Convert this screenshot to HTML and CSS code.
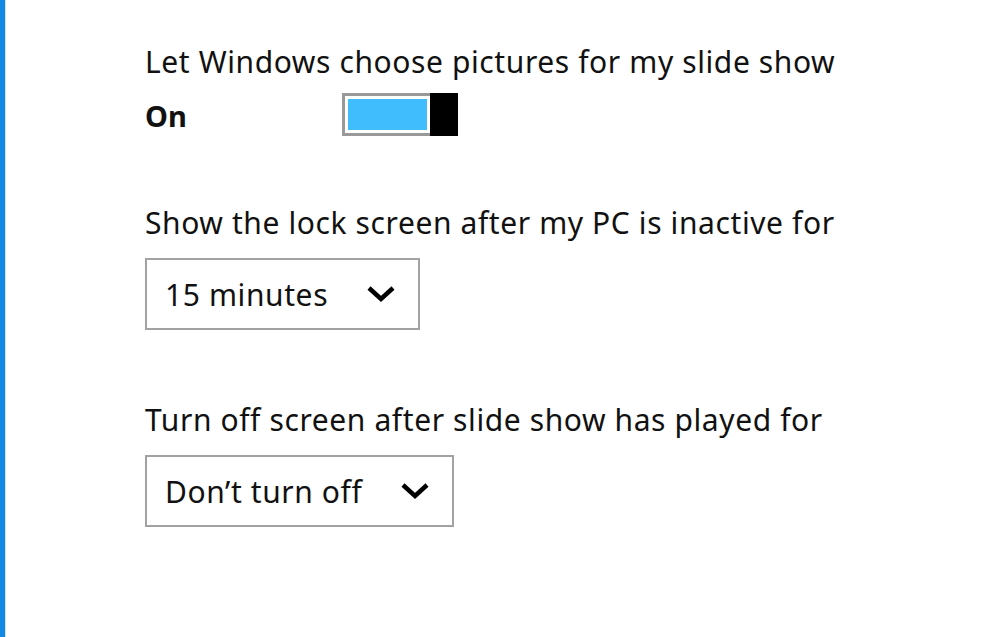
FILE: index.html
```html
<!DOCTYPE html>
<html lang="en">
<head>
<meta charset="utf-8">
<title>Lock screen settings</title>
<link rel="stylesheet" href="styles.css">
</head>
<body>
<div class="page">
  <div class="accent"></div>
  <main class="content">
    <section class="setting setting-first">
      <div class="label">Let Windows choose pictures for my slide show</div>
      <div class="toggle-row">
        <span class="state">On</span>
        <span class="toggle"><span class="track"></span><span class="thumb"></span></span>
      </div>
    </section>
    <section class="setting setting-second">
      <div class="label">Show the lock screen after my PC is inactive for</div>
      <div class="select">
        <span class="select-text">15 minutes</span>
        <svg class="chev" width="30" height="18" viewBox="0 0 30 18"><polyline points="3,3 15,14 27,3" fill="none" stroke="#000" stroke-width="4.5" stroke-linejoin="miter"/></svg>
      </div>
    </section>
    <section class="setting setting-third">
      <div class="label">Turn off screen after slide show has played for</div>
      <div class="select">
        <span class="select-text">Don’t turn off</span>
        <svg class="chev" width="30" height="18" viewBox="0 0 30 18"><polyline points="3,3 15,14 27,3" fill="none" stroke="#000" stroke-width="4.5" stroke-linejoin="miter"/></svg>
      </div>
    </section>
  </main>
</div>
</body>
</html>
```
FILE: styles.css
```css
html, body {
  margin: 0;
  padding: 0;
  background: #ffffff;
}
body {
  font-family: "Noto Sans", "Open Sans", "DejaVu Sans", sans-serif;
  color: #111;
}
.page {
  display: flex;
  min-height: 637px;
}
.accent {
  width: 5px;
  background: #1489e4;
  border-right: 1px solid #cfe6fa;
  flex: none;
}
.content {
  padding-left: 139px;
  padding-top: 42px;
  display: flex;
  flex-direction: column;
}
.label {
  font-size: 30px;
  line-height: 40px;
  letter-spacing: 0.6px;
  white-space: nowrap;
}
.toggle-row {
  display: flex;
  align-items: center;
  margin-top: 8px;
}
.state {
  width: 197px;
  font-size: 29px;
  font-weight: 700;
  line-height: 44px;
  padding-top: 4px;
}
.toggle {
  display: flex;
  width: 116px;
  height: 43px;
  box-sizing: border-box;
}
.track {
  flex: 1;
  border: 3px solid #999;
  border-right: none;
  padding: 3px 0 3px 3px;
  background: #3fbdfc;
  background-clip: content-box;
  box-shadow: inset 0 0 0 3px #fff;
}
.thumb {
  width: 28px;
  background: #000;
}
.setting-second { margin-top: 65px; }
.setting-third { margin-top: 70px; }
.select {
  display: flex;
  width: fit-content;
  align-items: center;
  gap: 38px;
  height: 72px;
  box-sizing: border-box;
  border: 2px solid #a2a2a2;
  padding: 0 22px 0 18px;
  margin-top: 15px;
  font-size: 30px;
  letter-spacing: 0.6px;
}
.chev { flex: none; }
```
